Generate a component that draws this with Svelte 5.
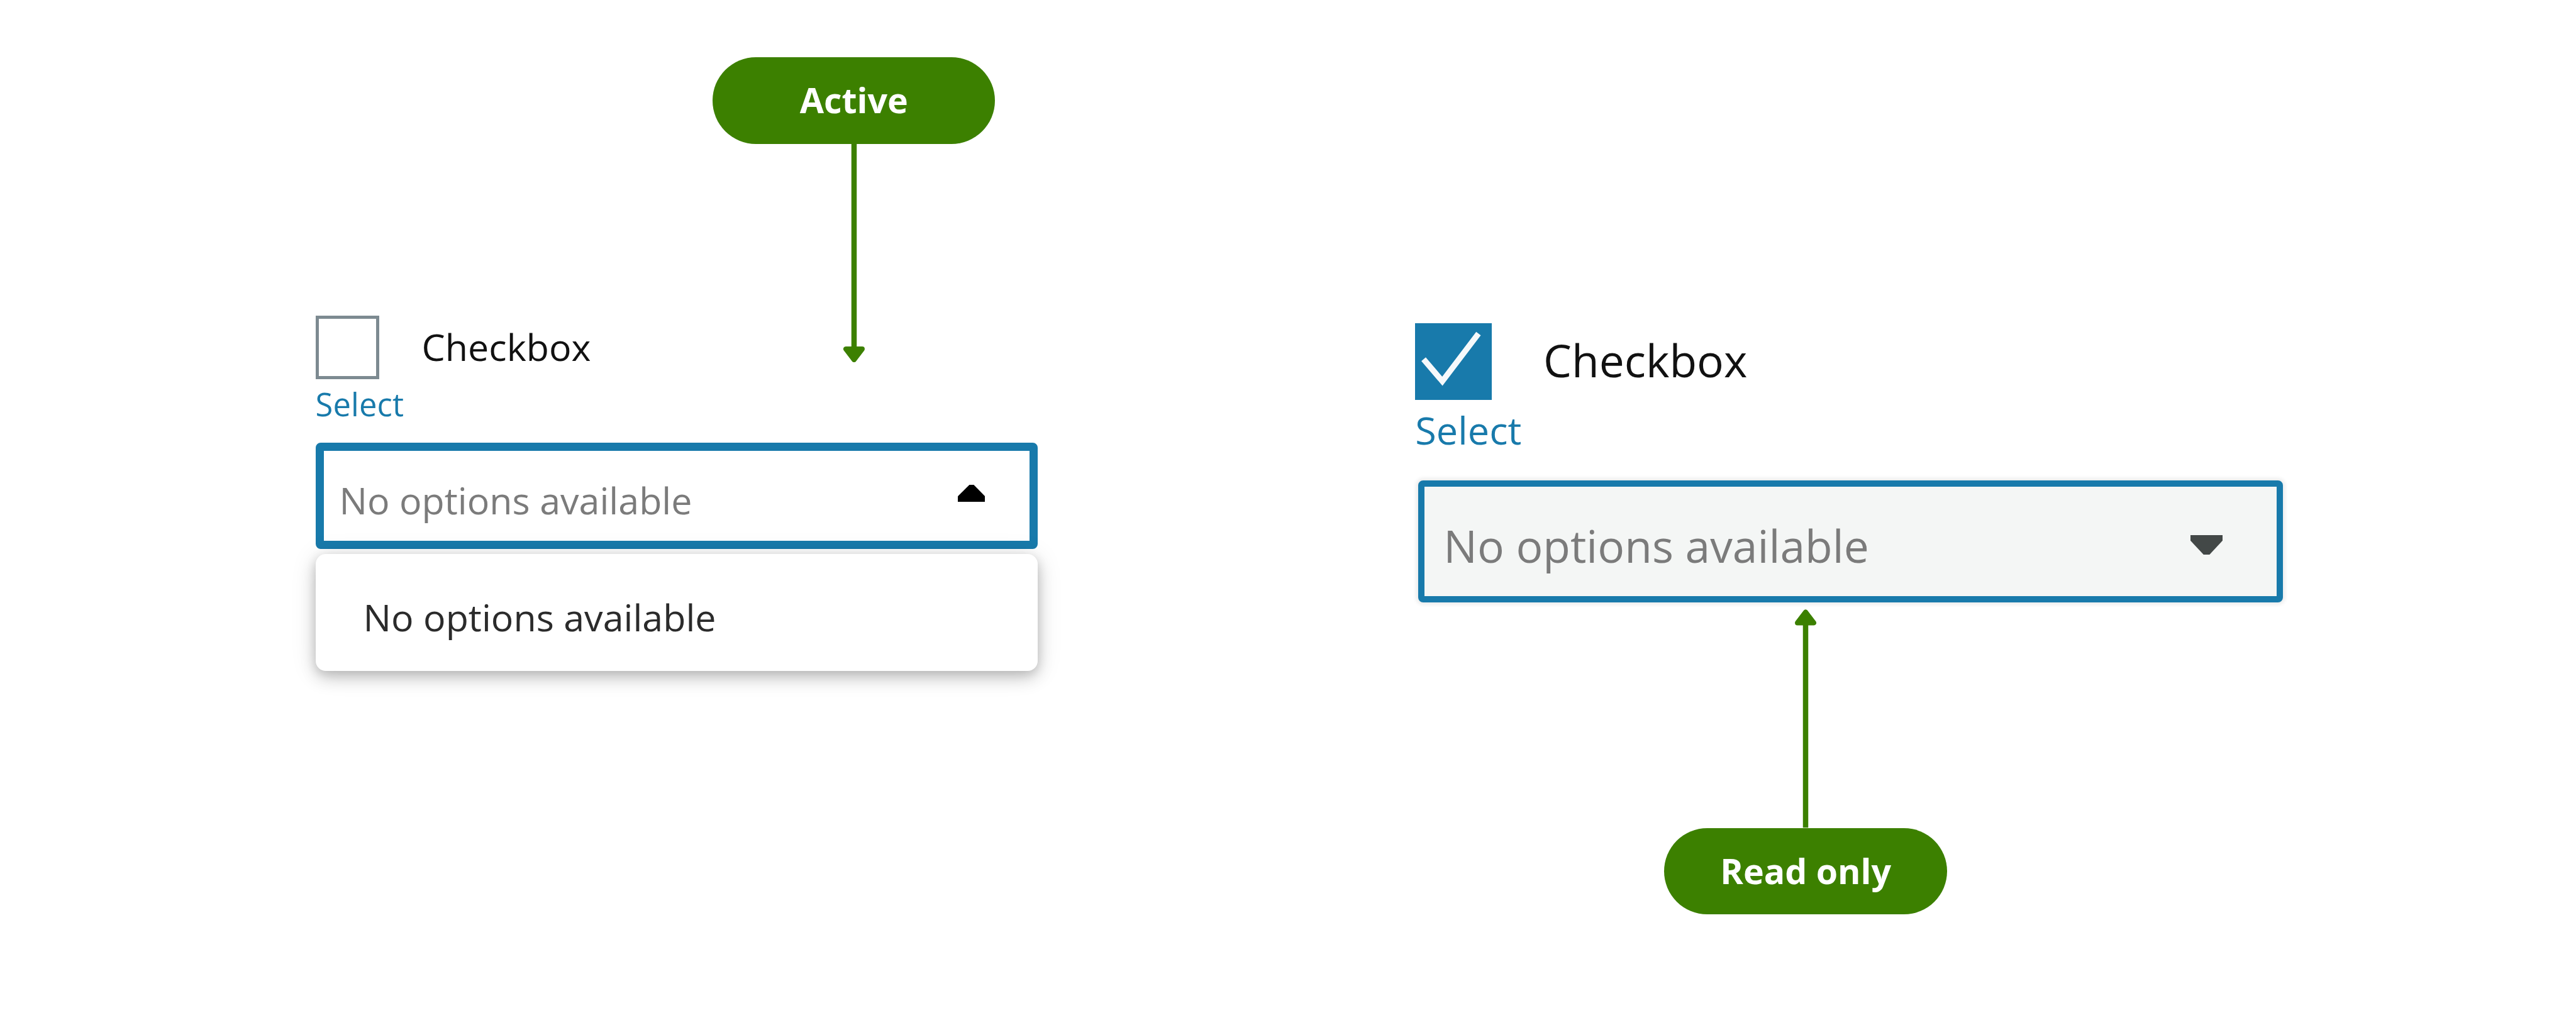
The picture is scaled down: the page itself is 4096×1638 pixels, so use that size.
<script lang="ts">
	interface Field {
		variant: 'active' | 'readonly';
		checked: boolean;
		open: boolean;
		note: string;
	}

	const EMPTY_TEXT = 'No options available';

	const fields: Field[] = [
		{ variant: 'active', checked: false, open: true, note: 'Active' },
		{ variant: 'readonly', checked: true, open: false, note: 'Read only' }
	];
</script>

<main class="board">
	{#each fields as field (field.variant)}
		<section class="field {field.variant}">
			<div class="check-row">
				<span class="checkbox" class:checked={field.checked} role="checkbox" aria-checked={field.checked} aria-label="Checkbox" tabindex="0">
					{#if field.checked}
						<svg class="tick" viewBox="0 0 140 140">
							<path d="M15.500 65.500 L49.700 105.500 L115.500 19" />
						</svg>
					{/if}
				</span>
				<span class="check-label">Checkbox</span>
			</div>

			<div class="select-label">Select</div>

			<div class="select-wrap">
				<div class="select">
					<span class="placeholder">{EMPTY_TEXT}</span>
					{#if field.open}
						<svg class="caret" viewBox="0 0 49.500 31">
							<path d="M21 0 H29 L49.500 21 V31 H0 V21 Z" />
						</svg>
					{:else}
						<svg class="caret" viewBox="0 0 58.400 35.700">
							<path d="M0 0 H58.400 V10 L34.500 35.700 H24 L0 10 Z" />
						</svg>
					{/if}
				</div>
				{#if field.open}
					<div class="menu">
						<span class="option">{EMPTY_TEXT}</span>
					</div>
				{/if}
			</div>

			<div class="callout">
				<div class="pill">{field.note}</div>
				<svg class="arrow" viewBox="0 0 34 348">
					<path class="shaft" d="M17 0 V330" />
					<path class="head" d="M4 326.500 H30 L17 343.500 Z" />
				</svg>
			</div>
		</section>
	{/each}
</main>

<style>
	:global(body) {
		margin: 0;
		background: #fff;
	}

	.board {
		display: flex;
		align-items: flex-start;
		gap: 600px;
		box-sizing: border-box;
		width: 4096px;
		height: 1638px;
		padding: 502px 0 0 501.6px;
		overflow: hidden;
		font-family: 'Open Sans', 'Noto Sans', sans-serif;
	}

	/* --u is one pixel of the control at its normal size */
	.field {
		position: relative;
		flex: none;
		width: 1148.6px;
	}

	.active { --u: 4.225px; }

	.readonly {
		--u: 5.096px;
		width: 1380px;
		margin-top: 12px;
	}

	.check-row {
		display: flex;
		align-items: center;
		gap: calc(16 * var(--u));
	}

	.checkbox {
		box-sizing: border-box;
		width: calc(24 * var(--u));
		height: calc(24 * var(--u));
		border: 5px solid #7d8a91;
	}

	.checkbox.checked {
		border: none;
		background: #187aab;
	}

	.tick {
		display: block;
		width: 100%;
		height: 100%;
	}

	.tick path {
		fill: none;
		stroke: #f6f9fb;
		stroke-width: 10.5;
	}

	.check-label {
		padding-bottom: 3px;
		font-size: calc(14 * var(--u));
		line-height: 1.3;
		color: #111;
	}

	.select-label {
		margin-bottom: 22px;
		font-size: calc(12 * var(--u));
		line-height: calc(18.7 * var(--u));
		color: #187aab;
		letter-spacing: 0.1px;
	}

	.readonly .select-label {
		margin-bottom: 31px;
		line-height: calc(19 * var(--u));
	}

	.select-wrap { position: relative; }

	.select {
		display: flex;
		align-items: center;
		justify-content: space-between;
		box-sizing: border-box;
		height: 169px;
		padding: 0 calc(16.9 * var(--u)) 0 calc(5.9 * var(--u));
		border: 13px solid #187aab;
		border-radius: 8px;
		background: #fff;
	}

	.readonly .select {
		width: 1375px;
		height: 194px;
		margin-left: 5px;
		border-width: 10px;
		background: #f4f6f5;
		box-shadow: 0 0 6px 3px rgba(0, 20, 20, 0.09);
	}

	.placeholder, .option {
		font-size: calc(14 * var(--u));
		line-height: 1.3;
		white-space: nowrap;
	}

	.placeholder {
		padding-top: 14px;
		color: #7b7b7b;
	}

	.caret {
		width: 43.3px;
		height: 27.1px;
		margin-bottom: 9px;
		fill: #000;
	}

	.readonly .caret {
		width: 51px;
		height: 31.2px;
		margin: 10px 0 0;
		fill: #434847;
	}

	.menu {
		position: absolute;
		top: calc(100% + 8px);
		left: 0;
		right: 0;
		display: flex;
		align-items: center;
		box-sizing: border-box;
		height: 186px;
		padding: 14px 76px 0;
		border-radius: 16px;
		background: #fff;
		box-shadow:
			0 4px 16px 0 rgba(0, 10, 5, 0.12),
			0 12px 26px 0 rgba(0, 10, 5, 0.14),
			0 4px 42px 0 rgba(0, 10, 5, 0.12);
	}

	.option { color: #2b2b2b; }

	/* Notes pinned over the controls */
	.callout {
		position: absolute;
		top: -410.7px;
		left: 631.5px;
		display: flex;
		flex-direction: column;
		align-items: center;
		width: 449.4px;
	}

	.readonly .callout {
		top: 455.4px;
		left: 396.3px;
		flex-direction: column-reverse;
	}

	.pill {
		display: flex;
		align-items: center;
		justify-content: center;
		box-sizing: border-box;
		width: 100%;
		height: 137.4px;
		padding-bottom: 2px;
		border-radius: 69px;
		background: #3c8000;
		color: #fff;
		font-size: 55.5px;
		font-weight: 700;
		line-height: 1.3;
	}

	.arrow {
		display: block;
		width: 34px;
		height: 347.5px;
	}

	.readonly .arrow { transform: rotate(180deg); }

	.shaft {
		stroke: #3c8000;
		stroke-width: 8.5;
	}

	.head {
		fill: #3c8000;
		stroke: #3c8000;
		stroke-width: 8;
		stroke-linejoin: round;
	}
</style>
